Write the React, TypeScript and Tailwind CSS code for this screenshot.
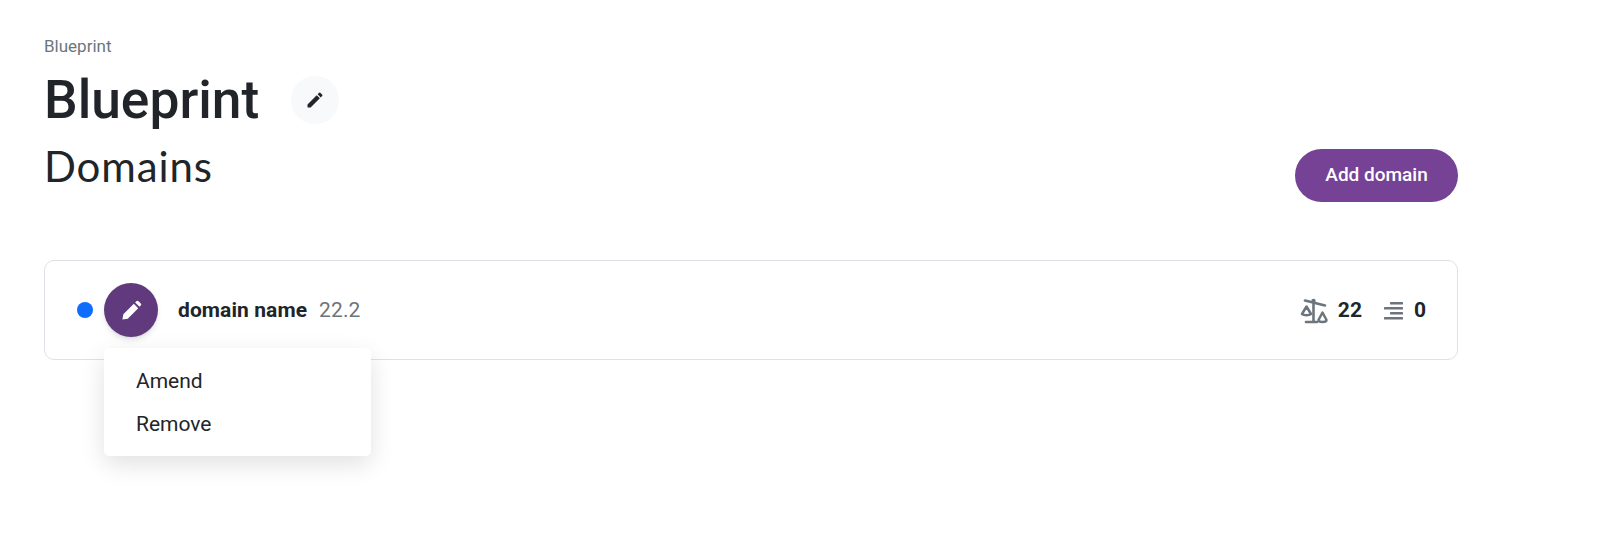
import React from 'react';
import { MdEdit } from 'react-icons/md';

const PencilIcon: React.FC<{ className?: string }> = ({ className }) => (
  <svg viewBox="0 0 24 24" fill="currentColor" className={className}>
    <path d="M2.5 21.5l1-5.6L14.4 5l4.6 4.6L8.1 20.5l-5.6 1zM15.8 3.6l1.3-1.3a1.6 1.6 0 0 1 2.2 0l2.4 2.4a1.6 1.6 0 0 1 0 2.2l-1.3 1.3-4.6-4.6z" />
  </svg>
);

const ScaleIcon: React.FC = () => (
  <svg viewBox="3 5 28 26" className="w-[28px] h-[26px]" fill="none" stroke="#6c757d" strokeWidth="2.5" strokeLinecap="round" strokeLinejoin="round">
    <path d="M8 7.5l20 5" />
    <circle cx="16.5" cy="8" r="2.2" fill="#6c757d" stroke="none" />
    <path d="M16.5 9v19.5M9 29h11" strokeWidth="2.6" />
    <path d="M9.5 13.5l-4.5 7.5a5 2 0 0 0 9 0z" />
    <path d="M25.5 19.5l-4 7.5a4 2 0 0 0 8 0z" />
  </svg>
);

const ListIcon: React.FC = () => (
  <svg viewBox="0 0 19 18" className="w-[19px] h-[18px]" fill="#6c757d">
    <rect x="6" y="0" width="13" height="2.5" rx="0.6" />
    <rect x="0" y="5" width="19" height="2.5" rx="0.6" />
    <rect x="6" y="10" width="13" height="2.5" rx="0.6" />
    <rect x="0" y="15" width="19" height="2.5" rx="0.6" />
  </svg>
);

export default function App() {
  return (
    <div className="min-h-screen bg-white pl-[44px] pt-[36px] w-[1458px] text-[#212529] font-['Roboto',sans-serif]">
      <p className="text-[17px] leading-[20px] text-[#6c757d]">Blueprint</p>

      <div className="flex items-center mt-[10px] h-[68px]">
        <h1 className="text-[53.3px] leading-[64px] font-medium">Blueprint</h1>
        <button className="ml-[32px] w-[48px] h-[48px] rounded-full bg-[#f8f9fa] flex items-center justify-center -mt-[1px]">
          <MdEdit className="w-[20px] h-[20px] text-[#212529]" />
        </button>
      </div>

      <div className="flex items-start justify-between mt-[5px]">
        <h2 className="text-[42px] leading-[52px] pt-[1px] font-normal font-['Lato',sans-serif] tracking-[0.9px]">Domains</h2>
        <button className="mt-[10px] w-[163px] h-[53px] rounded-full bg-[#754296] text-white text-[19px] font-medium">
          Add domain
        </button>
      </div>

      <div className="relative mt-[58px] h-[100px] border border-[#dee2e6] rounded-[10px] flex items-center pl-[32px] pr-[31px]">
        <span className="w-[16px] h-[16px] rounded-full bg-[#0d6efd]" />
        <button className="ml-[11px] w-[54px] h-[54px] rounded-full bg-[#613a7d] shadow-md flex items-center justify-center">
          <PencilIcon className="w-[23px] h-[23px] text-white" />
        </button>
        <span className="ml-[20px] pt-[1px] text-[21px] font-bold tracking-[0.08px]">domain name</span>
        <span className="ml-[12px] pt-[1px] text-[21px] text-[#6c757d] tracking-[0.1px]">22.2</span>

        <div className="ml-auto flex items-center pt-[1px]">
          <ScaleIcon />
          <span className="ml-[10px] text-[21px] font-bold">22</span>
          <span className="ml-[22px]"><ListIcon /></span>
          <span className="ml-[11px] text-[21px] font-bold">0</span>
        </div>

        <div className="absolute left-[59px] top-[87px] w-[267px] h-[108px] bg-white rounded-[5px] shadow-[0_8px_24px_rgba(0,0,0,0.12)] pt-[12px]">
          <p className="pl-[32px] text-[21px] leading-[43px]">Amend</p>
          <p className="pl-[32px] text-[21px] leading-[43px]">Remove</p>
        </div>
      </div>
    </div>
  );
}
